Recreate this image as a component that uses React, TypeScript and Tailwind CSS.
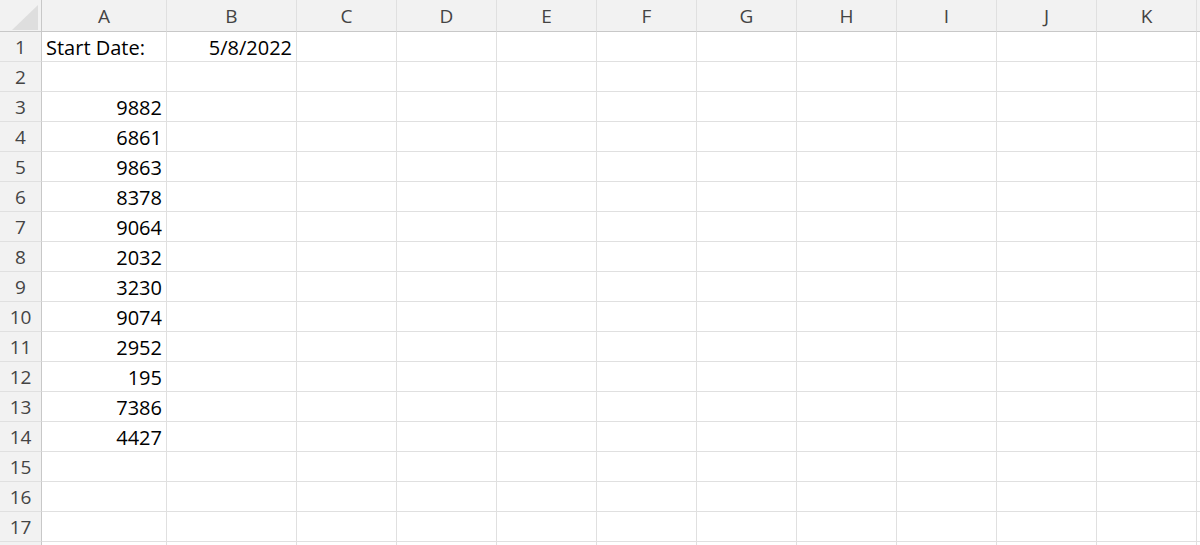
const columns = ["A", "B", "C", "D", "E", "F", "G", "H", "I", "J", "K", ""];

// cell values keyed by row number
const values: Record<number, { a?: string; b?: string }> = {
  1: { a: "Start Date:", b: "5/8/2022" },
  3: { a: "9882" },
  4: { a: "6861" },
  5: { a: "9863" },
  6: { a: "8378" },
  7: { a: "9064" },
  8: { a: "2032" },
  9: { a: "3230" },
  10: { a: "9074" },
  11: { a: "2952" },
  12: { a: "195" },
  13: { a: "7386" },
  14: { a: "4427" },
};

const rows = Array.from({ length: 18 }, (_, i) => i + 1);

export default function App() {
  return (
    <div
      className="h-[545px] w-[1200px] overflow-hidden bg-white"
      style={{ fontFamily: '"Open Sans", "Noto Sans", sans-serif' }}
    >
      <div className="grid grid-cols-[42px_125px_130px_repeat(9,100px)_1fr] grid-rows-[32px] auto-rows-[30px]">
        {/* corner */}
        <div className="relative border-b border-r border-[#c8c8c8] bg-[#f2f2f2]">
          <svg className="absolute left-[12px] top-[5px]" width="26" height="25" viewBox="0 0 26 25">
            <polygon points="26,0 26,25 0,25" fill="#dedede" />
          </svg>
        </div>
        {columns.map((c, i) => (
          <div
            key={i}
            className="flex items-center justify-center border-b border-r border-b-[#c8c8c8] border-r-[#e0e0e0] bg-[#f2f2f2] pt-[1px] text-[19px] text-[#444]"
          >
            {c}
          </div>
        ))}

        {rows.map((r) => {
          const v = values[r] ?? {};
          return [
            <div
              key={`h${r}`}
              className="flex items-center justify-center border-b border-r border-b-[#e0e0e0] border-r-[#c8c8c8] bg-[#f2f2f2] pt-[2px] text-[19px] text-[#444]"
            >
              {r < 18 ? r : ""}
            </div>,
            ...columns.map((_, ci) => {
              let text = "";
              let align = "justify-end pr-[4px]";
              if (ci === 0 && v.a) {
                text = v.a;
                if (isNaN(Number(v.a))) align = "justify-start pl-[4px]";
              }
              if (ci === 1 && v.b) text = v.b;
              return (
                <div
                  key={`${r}-${ci}`}
                  className={`flex items-center overflow-hidden whitespace-nowrap border-b border-r border-[#e0e0e0] pt-[3px] text-[20px] leading-none text-black ${align}`}
                >
                  {text}
                </div>
              );
            }),
          ];
        })}
      </div>
    </div>
  );
}
